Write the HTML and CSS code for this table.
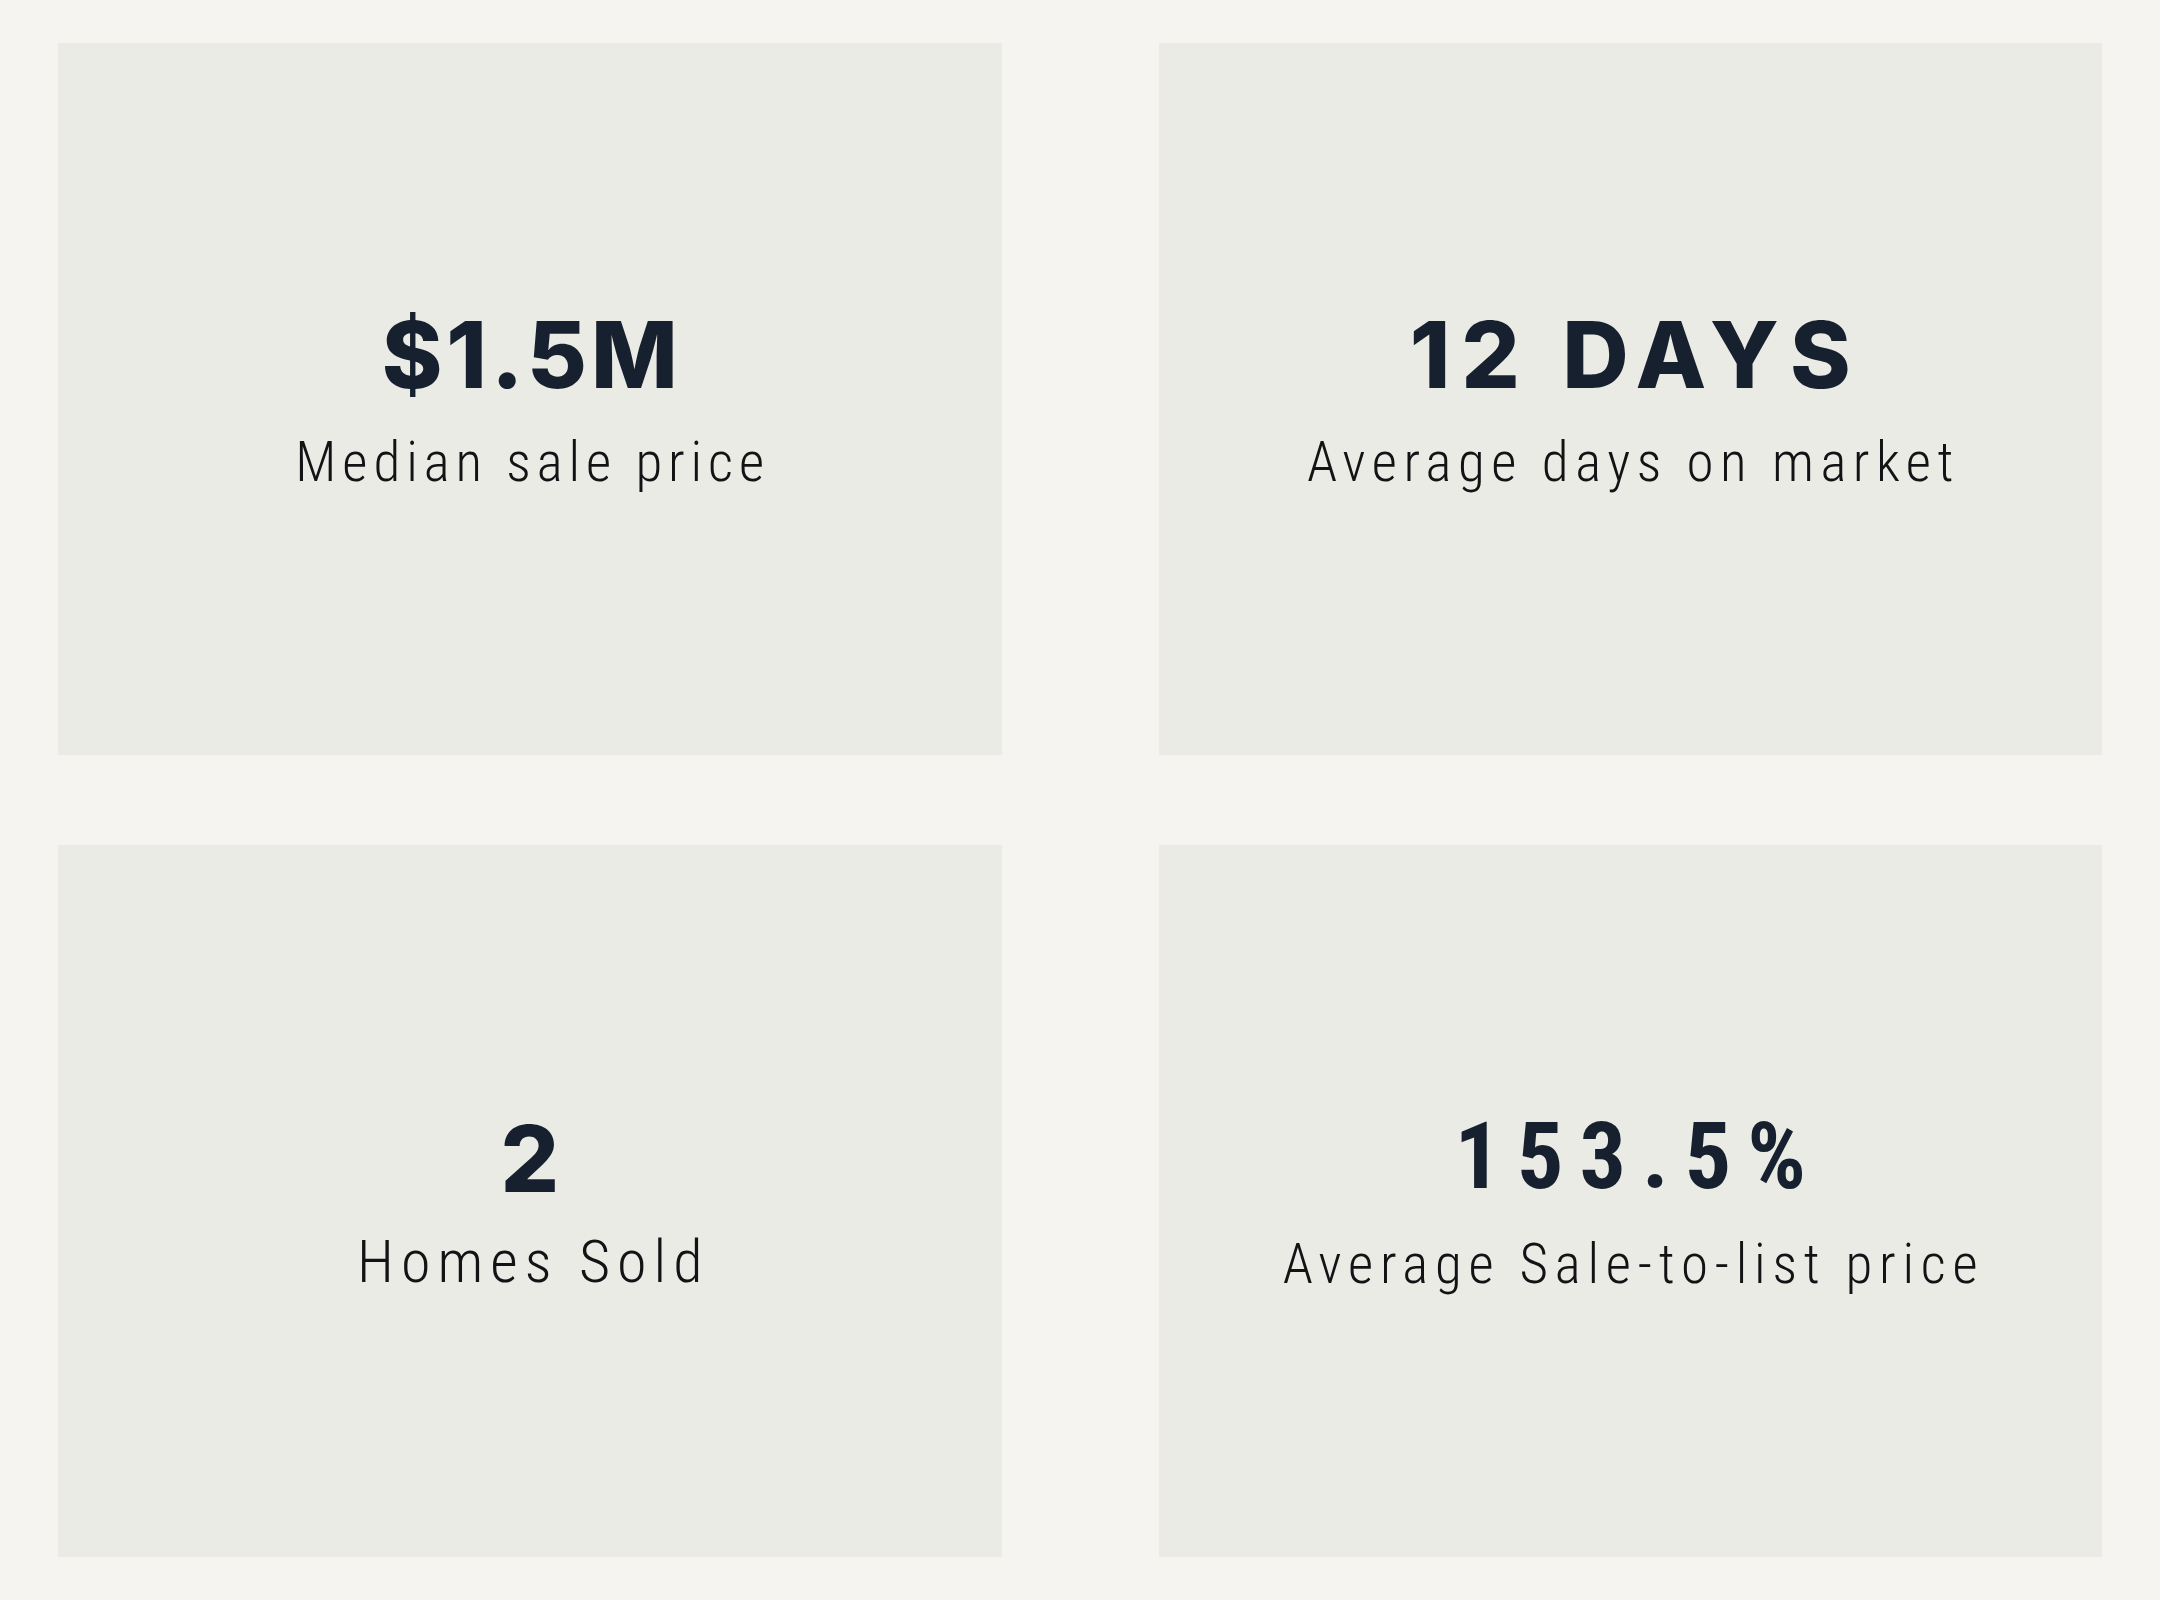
FILE: index.html
```html
<!DOCTYPE html>
<html lang="en">
<head>
<meta charset="utf-8">
<title>Market stats</title>
<link rel="stylesheet" href="styles.css">
</head>
<body>
<main class="stats">
  <section class="stat">
    <div class="stat-value">$1.5M</div>
    <div class="stat-label stat-label--tight">Median sale price</div>
  </section>
  <section class="stat">
    <div class="stat-value stat-value--wide">12 DAYS</div>
    <div class="stat-label">Average days on market</div>
  </section>
  <section class="stat">
    <div class="stat-value">2</div>
    <div class="stat-label stat-label--large">Homes Sold</div>
  </section>
  <section class="stat">
    <div class="stat-value stat-value--narrow">153.5%</div>
    <div class="stat-label stat-label--spaced">Average Sale-to-list price</div>
  </section>
</main>
</body>
</html>
```
FILE: styles.css
```css
html, body {
  margin: 0;
  padding: 0;
  background: #f5f4f0;
}

.stats {
  display: grid;
  grid-template-columns: 1fr 1fr;
  grid-template-rows: 712px 712px;
  column-gap: 157px;
  row-gap: 90px;
  padding: 43px 58px;
}

.stat {
  background: #ebebe5;
  display: flex;
  flex-direction: column;
  align-items: center;
  justify-content: center;
  text-align: center;
  padding-bottom: 2px;
}

.stat-value {
  font-family: Inter, "Noto Sans", sans-serif;
  font-weight: 800;
  font-size: 92px;
  line-height: 100px;
  letter-spacing: 4px;
  color: #16202e;
  margin-right: -4px;
}

.stat-value--wide {
  letter-spacing: 11px;
  margin-right: -11px;
}

.stat-value--narrow {
  font-family: "Roboto Condensed", Roboto, sans-serif;
  font-weight: 700;
  font-size: 92px;
  letter-spacing: 16px;
  margin-right: -16px;
}

.stat-label {
  margin-top: 27px;
  font-family: "Roboto Condensed", Roboto, sans-serif;
  font-weight: 300;
  font-size: 55px;
  line-height: 60px;
  letter-spacing: 6.5px;
  margin-right: -6.5px;
  color: #111315;
}

.stat-label--tight {
  letter-spacing: 5.9px;
  margin-right: -5.9px;
}

.stat-label--large {
  margin-top: 23px;
  font-size: 60px;
  letter-spacing: 7px;
  margin-right: -7px;
}

.stat-label--spaced {
  letter-spacing: 6.75px;
  margin-right: -6.75px;
}
```
